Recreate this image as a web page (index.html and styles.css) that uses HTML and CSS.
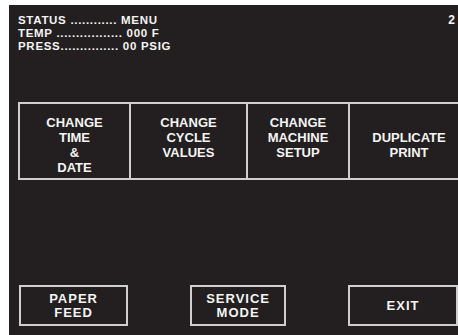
FILE: index.html
```html
<!DOCTYPE html>
<html lang="en">
  <head>
    <meta charset="UTF-8" />
    <meta name="viewport" content="width=device-width, initial-scale=1.0" />
    <title>Status Menu</title>
    <link rel="stylesheet" href="styles.css">
  </head>
  <body>
    <div class="screen">
      <div class="status">
        <div class="status-lines">
          <div>STATUS ............ MENU</div>
          <div>TEMP ................. 000 F</div>
          <div>PRESS............... 00 PSIG</div>
        </div>
        <div class="page-no">2</div>
      </div>

      <div class="menu-grid">
        <div class="menu-cell">CHANGE<br>TIME<br>&amp;<br>DATE</div>
        <div class="menu-cell">CHANGE<br>CYCLE<br>VALUES</div>
        <div class="menu-cell">CHANGE<br>MACHINE<br>SETUP</div>
        <div class="menu-cell menu-cell-low">DUPLICATE<br>PRINT</div>
      </div>

      <div class="bottom-row">
        <div class="key key-paper">PAPER<br>FEED</div>
        <div class="key key-service">SERVICE<br>MODE</div>
        <div class="key key-exit">EXIT</div>
      </div>
    </div>
  </body>
</html>
```

FILE: styles.css
```css
body {
  margin: 0;
  background-color: #ffffff;
  overflow: hidden;
  font-family: "Liberation Sans", Arial, sans-serif;
  font-weight: bold;
}
.screen {
  margin: 5px 0 0 9px;
  width: 449px;
  height: 330px;
  background-color: #231f20;
  color: #f4f4f4;
  overflow: hidden;
  display: flex;
  flex-direction: column;
  padding-bottom: 9px;
  box-sizing: border-box;
}
.status {
  display: flex;
  justify-content: space-between;
  padding: 9px 3px 0 9px;
  font-size: 11.5px;
  line-height: 13px;
}
.status-lines {
  white-space: nowrap;
  letter-spacing: 0.7px;
}
.page-no {
  font-size: 12px;
}
.menu-grid {
  display: grid;
  grid-template-columns: 109px 117px 102px 120px;
  margin: 49px 0 0 9px;
  height: 78px;
  flex-shrink: 0;
  border: 2px solid #cfcfcf;
  border-right: none;
  box-sizing: border-box;
}
.menu-cell {
  padding-top: 11px;
  text-align: center;
  font-size: 13px;
  line-height: 15px;
}
.menu-cell + .menu-cell {
  border-left: 2px solid #cfcfcf;
}
.menu-cell-low {
  padding-top: 26px;
}
.bottom-row {
  margin-top: auto;
  display: flex;
  gap: 62px;
  padding-left: 10px;
}
.key {
  height: 41px;
  border: 2px solid #cfcfcf;
  box-sizing: border-box;
  display: flex;
  align-items: center;
  justify-content: center;
  text-align: center;
  font-size: 13px;
  line-height: 14px;
  letter-spacing: 1px;
}
.key-paper {
  width: 115px;
}
.key-service {
  width: 101px;
}
.key-exit {
  width: 110px;
  flex-shrink: 0;
}
```
